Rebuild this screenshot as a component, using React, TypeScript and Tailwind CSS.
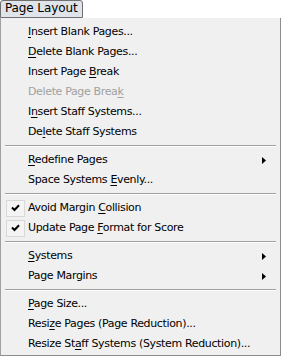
import React from "react";

type Item =
  | { sep: true }
  | {
      sep?: false;
      pre: string;
      key: string;
      post: string;
      disabled?: boolean;
      checked?: boolean;
      sub?: boolean;
    };

const items: Item[] = [
  { pre: "", key: "I", post: "nsert Blank Pages..." },
  { pre: "", key: "D", post: "elete Blank Pages..." },
  { pre: "Insert Page ", key: "B", post: "reak" },
  { pre: "Delete Page Brea", key: "k", post: "", disabled: true },
  { pre: "I", key: "n", post: "sert Staff Systems..." },
  { pre: "De", key: "l", post: "ete Staff Systems" },
  { sep: true },
  { pre: "", key: "R", post: "edefine Pages", sub: true },
  { pre: "Space Systems ", key: "E", post: "venly..." },
  { sep: true },
  { pre: "Avoid Margin ", key: "C", post: "ollision", checked: true },
  { pre: "Update Page ", key: "F", post: "ormat for Score", checked: true },
  { sep: true },
  { pre: "", key: "S", post: "ystems", sub: true },
  { pre: "Page Margins", key: "", post: "", sub: true },
  { sep: true },
  { pre: "", key: "P", post: "age Size..." },
  { pre: "Resi", key: "z", post: "e Pages (Page Reduction)..." },
  { pre: "Resize St", key: "a", post: "ff Systems (System Reduction)..." },
];

function Check() {
  return (
    <svg width="9" height="8" viewBox="0 0 9 8">
      <path d="M1 3.5 L3.5 6 L8 1.2" fill="none" stroke="#000" strokeWidth="2" />
    </svg>
  );
}

function Arrow() {
  return (
    <svg width="4" height="7" viewBox="0 0 4 7">
      <path d="M0 0 L4 3.5 L0 7 Z" fill="#000" />
    </svg>
  );
}

export default function App() {
  return (
    <div
      className="w-[281px] h-[356px] bg-white text-[11px] text-black"
      style={{ fontFamily: '"DejaVu Sans", Verdana, sans-serif' }}
    >
      <div className="flex h-[18px]">
        <div className="h-[18px] whitespace-nowrap rounded-t-[3px] border border-[#6f6f6f] bg-[#dfe3ea] px-[4px] leading-[15px] text-[12px] tracking-[-0.1px]">
          Page Layout
        </div>
      </div>
      <div className="h-[338px] border border-t-0 border-l-[#a0a0a0] border-r-[#8c8c8c] border-b-[#8c8c8c] bg-[#f0f0f0] pt-[4px] pb-[1px]">
        {items.map((it, i) =>
          it.sep ? (
            <div key={i} className="px-[4px] pt-[3px] pb-[3px]">
              <div className="h-px bg-[#a0a0a0]" />
              <div className="h-px bg-white" />
            </div>
          ) : (
            <div key={i} className="flex h-[20px] items-center">
              <div className="flex w-[27px] shrink-0 justify-center pl-[2px]">
                {it.checked && (
                  <div className="flex h-[17px] w-[19px] items-center justify-center border border-[#d8d8d8] bg-[#f4f4f4]">
                    <Check />
                  </div>
                )}
              </div>
              <div
                className={
                  "flex-1 whitespace-nowrap tracking-[-0.35px] " +
                  (it.disabled ? "text-[#a0a0a0]" : "text-black")
                }
              >
                {it.pre}
                {it.key && <span className="underline underline-offset-[2px]">{it.key}</span>}
                {it.post}
              </div>
              <div className="flex w-[18px] justify-start">{it.sub && <Arrow />}</div>
            </div>
          )
        )}
      </div>
    </div>
  );
}
